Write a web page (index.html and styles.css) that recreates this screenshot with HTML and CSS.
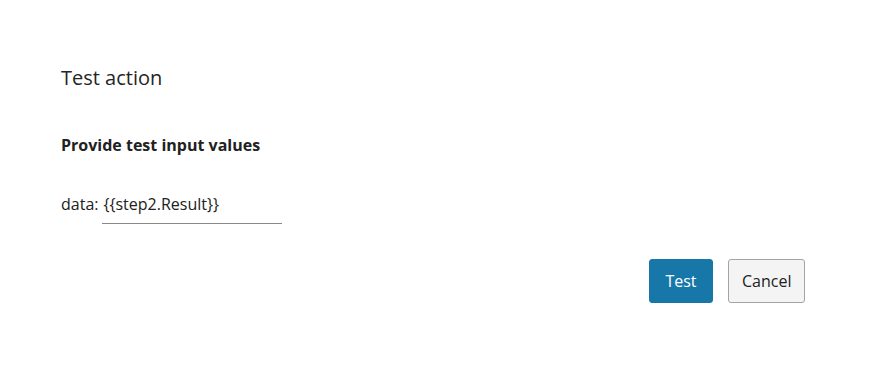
FILE: index.html
```html
<!DOCTYPE html>
<html>
<head>
<meta charset="utf-8">
<link rel="stylesheet" href="styles.css">
</head>
<body>
<div class="dialog">
  <h1 class="title">Test action</h1>
  <h2 class="subtitle">Provide test input values</h2>
  <div class="field">
    <label class="label" for="data">data:</label>
    <input class="input" id="data" type="text" value="{{step2.Result}}">
  </div>
  <div class="actions">
    <button class="btn btn-primary">Test</button>
    <button class="btn btn-secondary">Cancel</button>
  </div>
</div>
</body>
</html>
```
FILE: styles.css
```css
html, body {
  margin: 0;
  padding: 0;
  background: #ffffff;
}
body {
  font-family: "Open Sans", "Noto Sans", sans-serif;
  color: #212121;
}
.dialog {
  width: 874px;
  height: 368px;
  box-sizing: border-box;
  padding: 64px 69px 0 61px;
}
.title {
  margin: 0;
  font-size: 20px;
  font-weight: 400;
  line-height: 28px;
  color: #252525;
}
.subtitle {
  margin: 42px 0 0 0;
  font-size: 16px;
  font-weight: 700;
  line-height: 22px;
  color: #212121;
}
.field {
  margin-top: 37px;
  display: flex;
  align-items: baseline;
  gap: 4px;
}
.label {
  font-size: 16px;
  line-height: 22px;
  color: #212121;
}
.input {
  width: 180px;
  box-sizing: border-box;
  border: none;
  border-bottom: 1px solid #8a8a8a;
  outline: none;
  padding: 0 1px 8px 1px;
  font-family: "Open Sans", "Noto Sans", sans-serif;
  font-size: 16px;
  line-height: 22px;
  height: 31px;
  color: #212121;
  background: transparent;
}
.actions {
  margin-top: 35px;
  display: flex;
  justify-content: flex-end;
  gap: 15px;
}
.btn {
  height: 44px;
  box-sizing: border-box;
  border-radius: 3px;
  font-family: "Open Sans", "Noto Sans", sans-serif;
  font-size: 16px;
  padding: 0 13px;
  cursor: pointer;
}
.btn-primary {
  width: 64px;
  background: #1777a8;
  border: 1px solid #1777a8;
  color: #ffffff;
}
.btn-secondary {
  width: 77px;
  background: #f4f4f4;
  border: 1px solid #a3a3a3;
  color: #212121;
}
```
